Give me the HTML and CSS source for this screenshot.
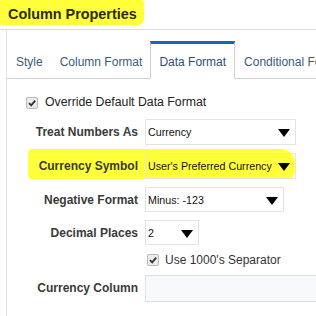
FILE: index.html
```html
<!DOCTYPE html>
<html lang="en">
<head>
    <meta charset="UTF-8">
    <title>Column Properties</title>
    <link rel="stylesheet" href="styles.css">
</head>
<body>
    <div class="titulo">
        <h1>Column Properties</h1>
    </div>

    <div class="painel">
        <div class="abas">
            <span class="aba">Style</span>
            <span class="aba">Column Format</span>
            <span class="aba ativa">Data Format</span>
            <span class="aba">Conditional Format</span>
        </div>

        <div class="conteudo">
            <label class="override">
                <span class="caixa"><svg viewBox="0 0 10 10" width="10" height="10"><path d="M2 5.2 L4.2 7.4 L8.2 2.6" fill="none" stroke="#333" stroke-width="1.8"/></svg></span>
                Override Default Data Format
            </label>

            <div class="formulario">
                <span class="rotulo">Treat Numbers As</span>
                <div class="seletor largo">Currency<span class="seta"></span></div>

                <span class="rotulo">Currency Symbol</span>
                <div class="seletor largo">User's Preferred Currency<span class="seta"></span></div>

                <span class="rotulo">Negative Format</span>
                <div class="seletor medio">Minus: -123<span class="seta"></span></div>

                <span class="rotulo">Decimal Places</span>
                <div class="seletor curto">2<span class="seta"></span></div>

                <span></span>
                <label class="separador">
                    <span class="caixa"><svg viewBox="0 0 10 10" width="10" height="10"><path d="M2 5.2 L4.2 7.4 L8.2 2.6" fill="none" stroke="#333" stroke-width="1.8"/></svg></span>
                    Use 1000's Separator
                </label>

                <span class="rotulo">Currency Column</span>
                <div class="campo"></div>
            </div>

            <!-- marca de marca-texto -->
            <div class="marca"></div>
        </div>
    </div>
</body>
</html>
```

FILE: styles.css
```css
body
{
    margin: 0;
    background-color: #fff;
    font-family: "Liberation Sans", Arial, sans-serif;
    overflow: hidden;
}
.titulo
{
    height: 29px;
    border-bottom: 1px solid #dcdcdc;
}
h1
{
    display: inline-block;
    margin: 0;
    padding: 6px 7px 3px 8px;
    font-size: 14.4px;
    line-height: 16px;
    font-weight: bold;
    color: #2b2b1a;
    background-color: #ffff3a;
    border-radius: 0 3px 6px 2px;
}
.painel
{
    margin-left: 6px;
    border-left: 1px solid #e2e2e2;
    height: 300px;
}
.abas
{
    display: flex;
    padding-top: 11px;
    border-bottom: 1px solid #cfcfcf;
    white-space: nowrap;
}
.aba
{
    padding: 11px 7px 8px 8px;
    font-size: 12px;
    line-height: 14px;
    color: #3c5a77;
    border: 1px solid transparent;
    border-top-width: 3px;
}
.aba:first-child
{
    border-left-width: 0;
    padding-left: 9px;
}
.aba.ativa
{
    background-color: #fff;
    border-color: #cfcfcf;
    border-top-color: #1a66b4;
    border-bottom-color: #fff;
    margin-bottom: -1px;
    padding-left: 8px;
    padding-right: 8px;
    color: #2e4e6e;
}
.conteudo
{
    position: relative;
    padding-top: 16px;
}
.override
{
    display: flex;
    align-items: center;
    gap: 7px;
    margin-left: 19px;
    font-size: 12.3px;
    line-height: 15px;
    color: #222;
}
.caixa
{
    width: 10px;
    height: 10px;
    border: 1px solid #b8b8b8;
    background-color: #ececec;
    border-radius: 2px;
    display: inline-flex;
}
.formulario
{
    display: grid;
    grid-template-columns: 131px auto;
    grid-template-rows: 26px 26px 25px 25px 14px 26px;
    column-gap: 7px;
    row-gap: 8px;
    margin-top: 9px;
    justify-items: start;
    align-items: center;
    position: relative;
    z-index: 1;
}
.rotulo
{
    justify-self: end;
    font-size: 12px;
    font-weight: bold;
    color: #3a3a3a;
}
.seletor
{
    position: relative;
    box-sizing: border-box;
    height: 26px;
    padding: 6px 0 0 2px;
    border: 1px solid #e4e4e4;
    font-size: 10.7px;
    white-space: nowrap;
    color: #111;
}
.largo
{
    width: 151px;
}
.medio
{
    width: 139px;
    height: 25px;
}
.curto
{
    width: 54px;
    height: 25px;
}
.seta
{
    position: absolute;
    right: 5px;
    top: 9px;
    border-left: 6px solid transparent;
    border-right: 6px solid transparent;
    border-top: 8px solid #000;
}
.separador
{
    display: flex;
    align-items: center;
    gap: 6px;
    margin-left: 2px;
    font-size: 12px;
    color: #333;
}
.campo
{
    box-sizing: border-box;
    width: 180px;
    height: 27px;
    border: 1px solid #e0e0e0;
    background-color: #f8f9fc;
}
.marca
{
    position: absolute;
    left: 21px;
    top: 70px;
    width: 267px;
    height: 30px;
    background-color: #ffff3a;
    border-radius: 4px 14px 8px 3px;
    z-index: 0;
}
```
